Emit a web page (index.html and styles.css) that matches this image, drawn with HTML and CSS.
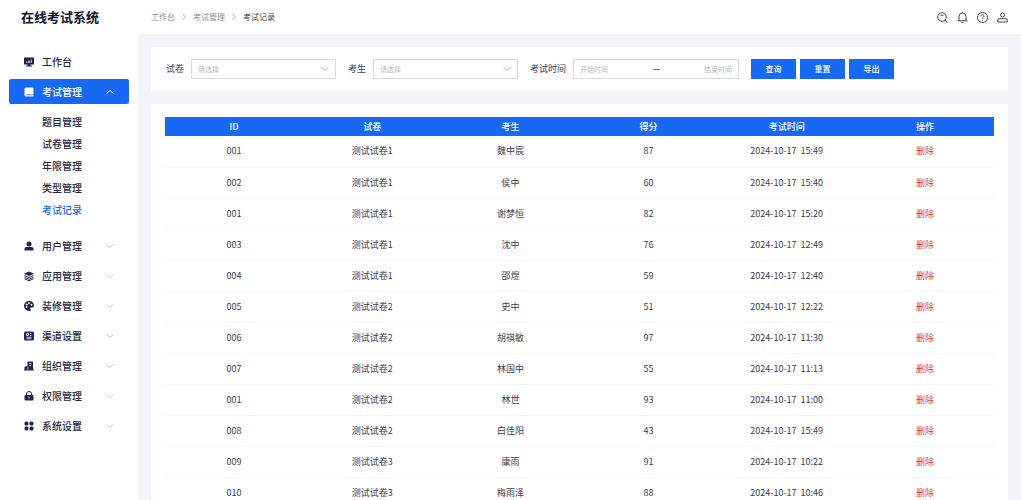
FILE: index.html
```html
<!DOCTYPE html>
<html lang="zh-CN">
<head>
  <meta charset="UTF-8" />
  <meta name="viewport" content="width=device-width, initial-scale=1.0" />
  <title>在线考试系统</title>
  <link rel="stylesheet" href="styles.css">
</head>
<body>
  <!-- shared chevron shapes -->
  <svg class="sprite" aria-hidden="true">
    <symbol id="down" viewBox="0 0 8 8"><path d="M.5 2.500 4 5.500 7.500 2.500" /></symbol>
    <symbol id="up" viewBox="0 0 8 8"><path d="M.5 5.500 4 2.500 7.500 5.500" /></symbol>
    <symbol id="next" viewBox="0 0 4 8"><path d="M.5 1 3.500 4 .5 7" /></symbol>
  </svg>

  <div class="layout">
    <aside class="sidebar">
      <h1 class="logo">在线考试系统</h1>
      <nav class="menu">
        <a class="menu-item" href="#">
          <svg class="icon" viewBox="0 0 20 20"><path d="M1 1h18a1 1 0 0 1 1 1v12a1 1 0 0 1-1 1h-6v2h3v2H4v-2h3v-2H1a1 1 0 0 1-1-1V2a1 1 0 0 1 1-1z" /><path class="cut" d="M5.500 12V9M8.500 12V7M11.500 12V7M14.500 12V5" /></svg>
          <span>工作台</span>
        </a>
        <a class="menu-item active" href="#">
          <svg class="icon" viewBox="0 0 20 20"><path d="M4 1h12a3 3 0 0 1 3 3v11H4a1 1 0 0 0 0 1.500h15V19H4a3 3 0 0 1-3-3V4a3 3 0 0 1 3-3z" /></svg>
          <span>考试管理</span>
          <svg class="arrow"><use href="#up" /></svg>
        </a>
        <div class="submenu">
          <a href="#">题目管理</a>
          <a href="#">试卷管理</a>
          <a href="#">年限管理</a>
          <a href="#">类型管理</a>
          <a class="current" href="#">考试记录</a>
        </div>
        <a class="menu-item" href="#">
          <svg class="icon" viewBox="0 0 20 20"><circle cx="10" cy="6" r="5" /><path d="M1 19v-3a4 4 0 0 1 4-4h10a4 4 0 0 1 4 4v3z" /></svg>
          <span>用户管理</span>
          <svg class="arrow"><use href="#down" /></svg>
        </a>
        <a class="menu-item" href="#">
          <svg class="icon" viewBox="0 0 20 20"><path d="M10 1 20 5.500 10 10 0 5.500z" /><path class="line" d="M1 9l9 4 9-4M1 12.500l9 4 9-4M1 15.500l9 4 9-4" /></svg>
          <span>应用管理</span>
          <svg class="arrow"><use href="#down" /></svg>
        </a>
        <a class="menu-item" href="#">
          <svg class="icon" viewBox="0 0 20 20"><path d="M10 0a10 10 0 0 1 10 9c0 3-2 4-4 4h-2c-2 0-2 1-1 3s0 4-3 4A10 10 0 0 1 10 0z" /><g class="hole"><circle cx="10" cy="4.500" r="1.900" /><circle cx="5.500" cy="7" r="1.900" /><circle cx="5" cy="12" r="1.900" /><circle cx="15" cy="7.500" r="1.900" /></g></svg>
          <span>装修管理</span>
          <svg class="arrow"><use href="#down" /></svg>
        </a>
        <a class="menu-item" href="#">
          <svg class="icon" viewBox="0 0 20 20"><rect x="0" y="1" width="20" height="18" rx="3" /><path class="cut" d="M5 5h4v4H5zM12 5h3M12 9h3M5 12.500h10M5 15.500h10" /></svg>
          <span>渠道设置</span>
          <svg class="arrow"><use href="#down" /></svg>
        </a>
        <a class="menu-item" href="#">
          <svg class="icon" viewBox="0 0 20 20"><path d="M8 1h9a1 1 0 0 1 1 1v15h2v2H0v-2h1v-5l6-3V2a1 1 0 0 1 1-1z" /><path class="cut" d="M10.500 5h4M10.500 9h4M8 11v6" /></svg>
          <span>组织管理</span>
          <svg class="arrow"><use href="#down" /></svg>
        </a>
        <a class="menu-item" href="#">
          <svg class="icon" viewBox="0 0 20 20"><rect x="1" y="8" width="18" height="11" rx="2" /><path class="line" d="M5 9V6a5 5 0 0 1 10 0v3" /><path class="cut" d="M10 11.500v4" /></svg>
          <span>权限管理</span>
          <svg class="arrow"><use href="#down" /></svg>
        </a>
        <a class="menu-item" href="#">
          <svg class="icon" viewBox="0 0 20 20"><rect x="1" y="1" width="8" height="8" rx="3" /><rect x="11" y="1" width="8" height="8" rx="3" /><rect x="1" y="11" width="8" height="8" rx="3" /><rect x="11" y="11" width="8" height="8" rx="3" /></svg>
          <span>系统设置</span>
          <svg class="arrow"><use href="#down" /></svg>
        </a>
      </nav>
    </aside>

    <div class="main">
      <header class="topbar">
        <nav class="breadcrumb">
          <a href="#">工作台</a>
          <svg><use href="#next" /></svg>
          <a href="#">考试管理</a>
          <svg><use href="#next" /></svg>
          <span>考试记录</span>
        </nav>
        <div class="tools">
          <button type="button" aria-label="搜索"><svg viewBox="0 0 22 22"><circle cx="10" cy="10" r="8.500" /><path d="M16 16l5 5M7 7.500a4.500 4.500 0 0 1 6 0" /></svg></button>
          <button type="button" aria-label="通知"><svg viewBox="0 0 22 22"><path d="M4 17.500V9a7 7 0 0 1 14 0v8.500M1 17.500h20M11 0v2M9 21h4" /></svg></button>
          <button type="button" aria-label="帮助"><svg viewBox="0 0 22 22"><circle cx="11" cy="11" r="10" /><path d="M8 8.500a3 3 0 1 1 4.500 2.600c-1 .6-1.500 1-1.500 2.400M11 15.500v2" /></svg></button>
          <button type="button" aria-label="个人中心"><svg viewBox="0 0 22 22"><circle cx="11" cy="6" r="4" /><path d="M1.500 20v-4a2.500 2.500 0 0 1 2.500-2.500h14a2.500 2.500 0 0 1 2.500 2.500v4z" /></svg></button>
        </div>
      </header>

      <main class="content">
        <form class="panel filters">
          <div class="field">
            <label for="paper">试卷</label>
            <div class="select">
              <select id="paper"><option>请选择</option></select>
              <svg><use href="#down" /></svg>
            </div>
          </div>
          <div class="field">
            <label for="student">考生</label>
            <div class="select">
              <select id="student"><option>请选择</option></select>
              <svg><use href="#down" /></svg>
            </div>
          </div>
          <div class="field">
            <label for="start">考试时间</label>
            <div class="range">
              <input id="start" type="text" placeholder="开始时间">
              <i class="dash"></i>
              <input class="end" type="text" placeholder="结束时间" aria-label="结束时间">
            </div>
          </div>
          <div class="actions">
            <button type="button">查询</button>
            <button type="reset">重置</button>
            <button type="button">导出</button>
          </div>
        </form>

        <section class="panel records">
          <table>
            <thead>
              <tr><th>ID</th><th>试卷</th><th>考生</th><th>得分</th><th>考试时间</th><th>操作</th></tr>
            </thead>
            <tbody>
              <tr><td>001</td><td>测试试卷1</td><td>魏中宸</td><td>87</td><td>2024-10-17&nbsp; 15:49</td><td><button type="button">删除</button></td></tr>
              <tr><td>002</td><td>测试试卷1</td><td>侯中</td><td>60</td><td>2024-10-17&nbsp; 15:40</td><td><button type="button">删除</button></td></tr>
              <tr><td>001</td><td>测试试卷1</td><td>谢梦恒</td><td>82</td><td>2024-10-17&nbsp; 15:20</td><td><button type="button">删除</button></td></tr>
              <tr><td>003</td><td>测试试卷1</td><td>沈中</td><td>76</td><td>2024-10-17&nbsp; 12:49</td><td><button type="button">删除</button></td></tr>
              <tr><td>004</td><td>测试试卷1</td><td>邵煜</td><td>59</td><td>2024-10-17&nbsp; 12:40</td><td><button type="button">删除</button></td></tr>
              <tr><td>005</td><td>测试试卷2</td><td>史中</td><td>51</td><td>2024-10-17&nbsp; 12:22</td><td><button type="button">删除</button></td></tr>
              <tr><td>006</td><td>测试试卷2</td><td>胡祺敏</td><td>97</td><td>2024-10-17&nbsp; 11:30</td><td><button type="button">删除</button></td></tr>
              <tr><td>007</td><td>测试试卷2</td><td>林国中</td><td>55</td><td>2024-10-17&nbsp; 11:13</td><td><button type="button">删除</button></td></tr>
              <tr><td>001</td><td>测试试卷2</td><td>林世</td><td>93</td><td>2024-10-17&nbsp; 11:00</td><td><button type="button">删除</button></td></tr>
              <tr><td>008</td><td>测试试卷2</td><td>白佳阳</td><td>43</td><td>2024-10-17&nbsp; 15:49</td><td><button type="button">删除</button></td></tr>
              <tr><td>009</td><td>测试试卷3</td><td>康雨</td><td>91</td><td>2024-10-17&nbsp; 10:22</td><td><button type="button">删除</button></td></tr>
              <tr><td>010</td><td>测试试卷3</td><td>梅雨泽</td><td>88</td><td>2024-10-17&nbsp; 10:46</td><td><button type="button">删除</button></td></tr>
            </tbody>
          </table>
        </section>
      </main>
    </div>
  </div>
</body>
</html>
```
FILE: styles.css
```css
:root {
  --blue: #1768f2;
  --navy: #1c2454;
  --text: #3c3c50;
  --muted: #8c8c94;
  --light: #b8b8be;
  --border: #d9d9dc;
  --page: #f4f4fb;
}

* {
  box-sizing: border-box;
}

body {
  margin: 0;
  font-family: "Noto Sans CJK SC", sans-serif;
  font-size: 9px;
  line-height: 14px;
  color: var(--text);
  background: var(--page);
}

a {
  color: inherit;
  text-decoration: none;
}

button,
input,
select {
  font: inherit;
  color: inherit;
  padding: 0;
  border: none;
  border-radius: 0;
  background: none;
}

button {
  cursor: pointer;
}

svg {
  display: block;
  flex: none;
}

.sprite {
  display: none;
}

.layout {
  display: flex;
  height: 100vh;
}

/* sidebar */
.sidebar {
  flex: none;
  width: 138px;
  padding: 0 9px;
  background: #fff;
  overflow: hidden;
}

.logo {
  margin: 0 0 15px;
  padding-left: 12px;
  font-size: 13px;
  line-height: 34px;
  font-weight: 700;
  color: #10122c;
}

.menu {
  display: flex;
  flex-direction: column;
  gap: 5px;
  font-size: 10px;
  color: #26283e;
  font-weight: 500;
}

.menu-item {
  display: flex;
  align-items: center;
  gap: 8px;
  height: 25px;
  padding: 0 15px;
  border-radius: 2px;
}

.menu-item.active {
  background: var(--blue);
  color: #fff;
}

.icon {
  width: 10px;
  height: 10px;
  fill: var(--navy);
}

.active .icon {
  fill: #fff;
}

.icon .cut {
  fill: none;
  stroke: #fff;
  stroke-width: 1.5;
}

.icon .line {
  fill: none;
  stroke: var(--navy);
  stroke-width: 2;
}

.icon .hole {
  fill: #fff;
}

.arrow {
  width: 8px;
  height: 8px;
  margin-left: auto;
  fill: none;
  stroke: #c4c4ca;
}

.active .arrow {
  stroke: #fff;
}

.submenu {
  display: flex;
  flex-direction: column;
  padding: 2px 0 7px 33px;
  line-height: 22px;
}

.submenu .current {
  color: var(--blue);
}

/* top bar */
.main {
  flex: 1;
  min-width: 0;
  display: flex;
  flex-direction: column;
}

.topbar {
  flex: none;
  display: flex;
  align-items: center;
  justify-content: space-between;
  height: 34px;
  padding: 0 13px;
  background: #fff;
}

.breadcrumb {
  display: flex;
  align-items: center;
  gap: 7px;
  font-size: 8px;
  color: var(--muted);
}

.breadcrumb svg {
  width: 4px;
  height: 8px;
  fill: none;
  stroke: #b0b0b6;
}

.breadcrumb span {
  color: var(--text);
}

.tools {
  display: flex;
  gap: 9px;
}

.tools svg {
  width: 11px;
  height: 11px;
  fill: none;
  stroke: #44454e;
  stroke-width: 2;
}

/* content */
.content {
  flex: 1;
  min-height: 0;
  display: flex;
  flex-direction: column;
  gap: 13px;
  padding: 13px 13px 0;
  overflow-y: auto;
  scrollbar-width: none;
}

.panel {
  flex: none;
  background: #fff;
}

.filters {
  display: flex;
  gap: 12px;
  padding: 12px 15px;
}

.field {
  display: flex;
  align-items: center;
  gap: 7px;
}

.select {
  display: grid;
  align-items: center;
  width: 145px;
  height: 20px;
  border: 1px solid var(--border);
}

.select select,
.select svg {
  grid-area: 1 / 1;
}

.select select {
  appearance: none;
  width: 100%;
  height: 18px;
  padding: 0 20px 0 6px;
  font-size: 7px;
  color: var(--light);
}

.select svg {
  width: 8px;
  height: 8px;
  margin-right: 6px;
  justify-self: end;
  fill: none;
  stroke: #b0b0b6;
  pointer-events: none;
}

.range {
  display: flex;
  align-items: center;
  width: 166px;
  height: 20px;
  padding: 0 6px;
  border: 1px solid var(--border);
}

.range input {
  flex: 1;
  min-width: 0;
  font-size: 7px;
}

.range input::placeholder {
  color: var(--light);
}

.range .end {
  text-align: right;
}

.dash {
  width: 7px;
  height: 1px;
  background: #77777f;
}

.actions {
  display: flex;
  gap: 4px;
}

.actions button {
  width: 45px;
  height: 20px;
  font-size: 8px;
  font-weight: 500;
  color: #fff;
  background: var(--blue);
}

/* records table */
.records {
  padding: 13px 14px;
}

table {
  width: 100%;
  table-layout: fixed;
  border-collapse: collapse;
  text-align: center;
}

th {
  height: 19px;
  padding: 0;
  font-weight: 500;
  color: #fff;
  background: var(--blue);
}

td {
  height: 31px;
  padding: 0;
  border-bottom: 1px solid #f4f4f6;
}

td button {
  color: #d8403f;
}
```
